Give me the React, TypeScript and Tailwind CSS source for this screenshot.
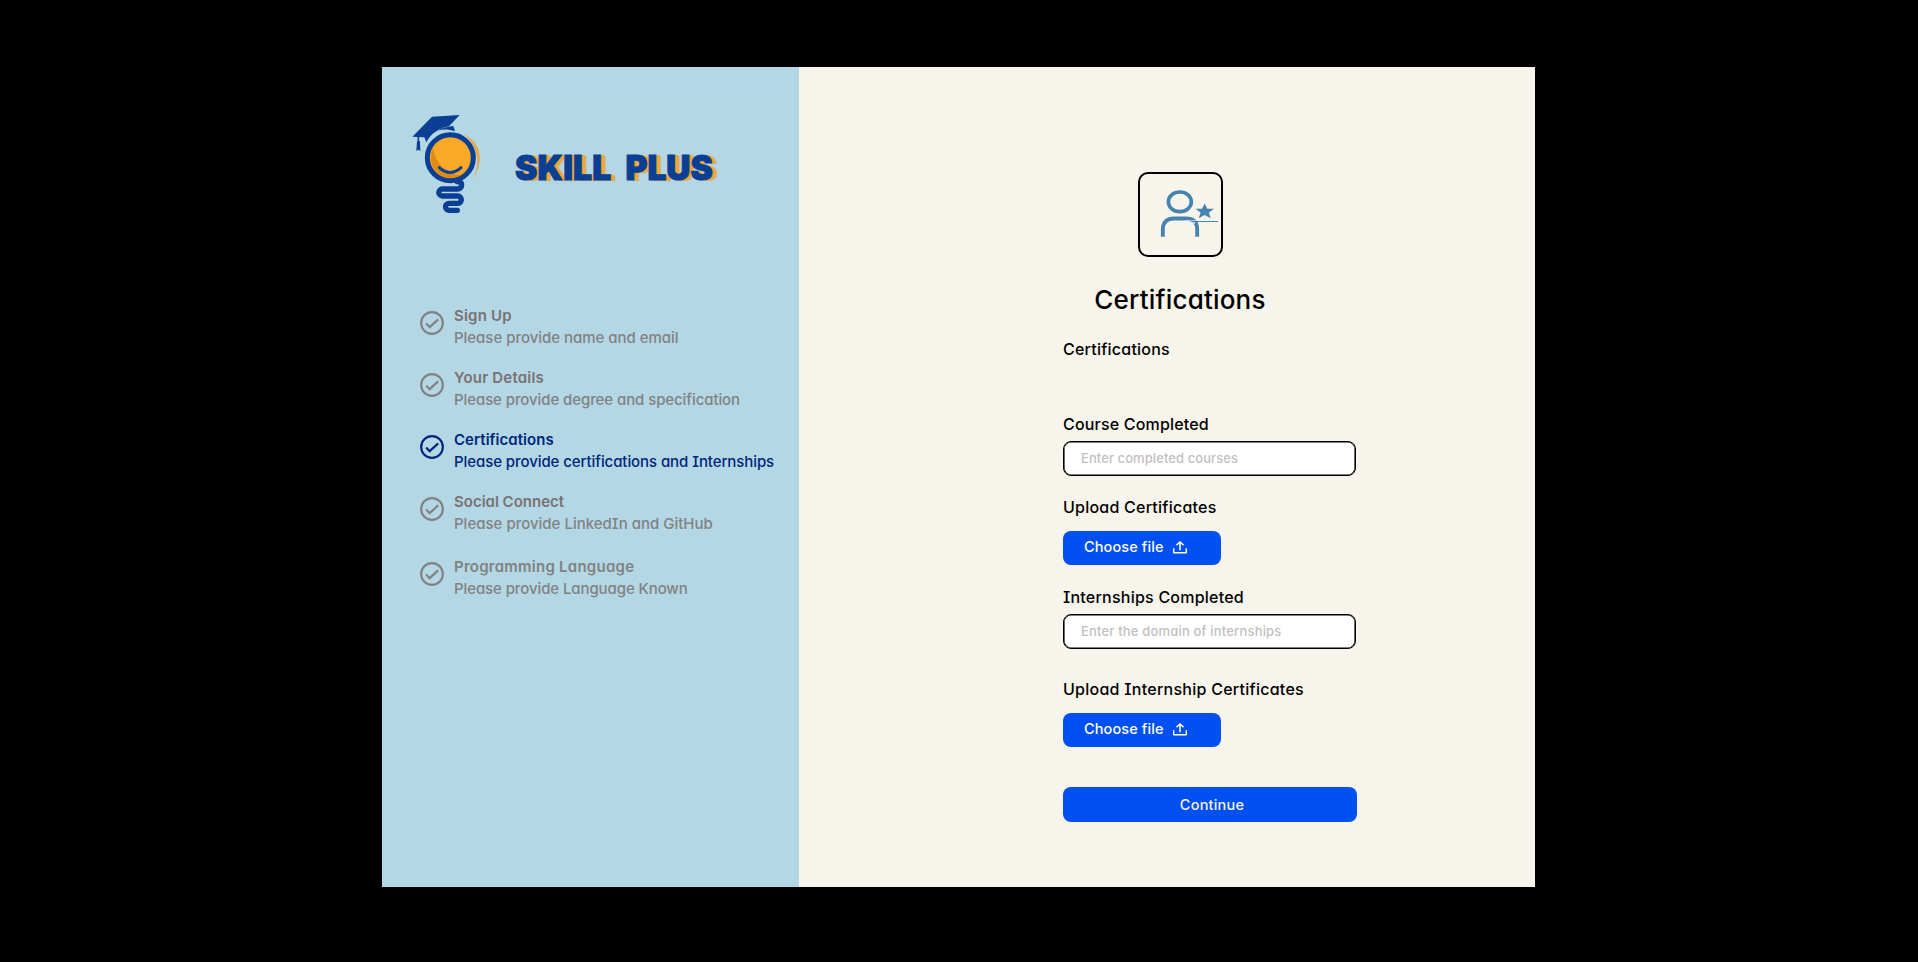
type Step = {
  title: string;
  detail: string;
  spacing: string;
  titleClass: string;
  detailClass: string;
  active?: boolean;
};

const steps: Step[] = [
  {
    title: "Sign Up",
    detail: "Please provide name and email",
    spacing: "mt-0",
    titleClass: "tracking-[0.2px] text-[#7a7272]",
    detailClass: "tracking-[-0.03px] text-[#828282]",
  },
  {
    title: "Your Details",
    detail: "Please provide degree and specification",
    spacing: "mt-[17.6px]",
    titleClass: "tracking-[0.2px] text-[#7a7272]",
    detailClass: "tracking-[-0.09px] text-[#828282]",
  },
  {
    title: "Certifications",
    detail: "Please provide certifications and Internships",
    spacing: "mt-[17.6px]",
    titleClass: "tracking-[0.05px] text-[#00267a]",
    detailClass: "tracking-[-0.08px] text-[#00267a]",
    active: true,
  },
  {
    title: "Social Connect",
    detail: "Please provide LinkedIn and GitHub",
    spacing: "mt-[18.4px]",
    titleClass: "tracking-normal text-[#7a7272]",
    detailClass: "tracking-normal text-[#828282]",
  },
  {
    title: "Programming Language",
    detail: "Please provide Language Known",
    spacing: "mt-[21px]",
    titleClass: "tracking-[0.25px] text-[#828282]",
    detailClass: "tracking-[-0.1px] text-[#828282]",
  },
];

function CheckCircle() {
  return (
    <svg viewBox="0 0 72 72" className="mt-[6px] size-6 shrink-0" fill="none" stroke="currentColor">
      <circle cx="36" cy="36" r="32.5" strokeWidth="6.5" />
      <path d="M18.5 37.5 29 48.5 54.5 25" strokeWidth="6.5" />
    </svg>
  );
}

function BulbLogo() {
  return (
    <svg viewBox="0 0 300 345" className="h-[115px] w-[100px] shrink-0" fill="none">
      <path d="M190 87C228 104 242 135 239 166C237 190 229 208 219 221C230 200 233 181 231 160C228 130 214 105 190 87Z" fill="#e9a94a" />
      <circle cx="151" cy="158.5" r="66" fill="#f9a828" />
      <path d="M98 128C92 142 90 170 99 187C110 210 132 223 155 222C168 221 180 216 188 210C150 212 113 190 98 128Z" fill="#e08a17" />
      <circle cx="151" cy="158.5" r="69" stroke="#0b3f94" strokeWidth="15" />
      <path d="M118 188Q150 217 183 188" stroke="#0b3f94" strokeWidth="9" strokeLinecap="round" />
      <path d="M96 35 179 30 147 64C118 69 92 86 79 112L73 97 37 95Z" fill="#0b3f94" />
      <path d="M113 77C126 68 142 65 160 63L165 79C147 73 130 72 113 77Z" fill="#0b3f94" />
      <path d="M55 93V114" stroke="#0b3f94" strokeWidth="5" />
      <path d="M51 109H60L61 138 55 134 49 138Z" fill="#0b3f94" />
      <path
        d="M172 230C181 230 185 234 185 240C185 247 180 252 172 252H127A10.5 10.5 0 0 0 127 273H173A10.5 10.5 0 0 1 173 295H147A10.5 10.5 0 0 0 147 316H172"
        stroke="#0b3f94"
        strokeWidth="16"
        strokeLinecap="round"
      />
    </svg>
  );
}

function PersonStar() {
  return (
    <svg viewBox="30 27 243 243" className="size-full" fill="none">
      <g stroke="#4683ae">
        <ellipse cx="149.5" cy="110.5" rx="34.5" ry="29.5" strokeWidth="11" />
        <path d="M98.5 215.5V193C98.5 171 112 160.500 132 160.500H167C189 160.500 201.500 171 201.500 193V215.500" strokeWidth="11.5" />
      </g>
      <path d="M164 167H201" stroke="#f7f4eb" strokeWidth="2" />
      <path d="M186 172H196L193 178Z" fill="#f7f4eb" />
      <path d="M190 169.500H264" stroke="#4683ae" strokeWidth="3" />
      <path
        d="M224 115.500 232 131H252L236.500 143 242.500 160 224 150 206 160 212 143 197 131H216Z"
        fill="#4683ae"
      />
    </svg>
  );
}

function ChooseFile() {
  return (
    <button className="flex h-[34.5px] w-[158px] items-center rounded-lg bg-[#004ff0] pb-[2px] pl-[21px] text-left text-[14.5px] font-medium tracking-[0.1px] text-white">
      <span className="w-[88.5px]">Choose file</span>
      <svg viewBox="0 0 42 38" className="h-[12.7px] w-[14px]" fill="none" stroke="currentColor" strokeWidth="4.5">
        <path d="M2 22V33Q2 35.500 5 35.500H37Q40 35.500 40 33V22" />
        <path d="M21 28V3M10.500 12.500 21 3 31.500 12.500" />
      </svg>
    </button>
  );
}

const labelClass = "h-5 whitespace-nowrap text-base leading-5 font-medium";
const inputClass =
  "h-[34.5px] w-[293px] rounded-lg border border-black bg-white pb-px pl-[17px] text-[13px] font-medium shadow-[inset_0_0_0_0.6px_#000] outline-none placeholder:text-[#c3c0c0]";

export default function App() {
  return (
    <main className="flex h-screen min-h-[962px] w-full justify-center overflow-hidden bg-black pt-[67px] pr-px font-[Inter,sans-serif] text-black [font-feature-settings:'cv08','cv11']">
      <div className="flex h-[820px] w-[1153px]">
        <aside className="w-[417px] shrink-0 bg-[#b3d7e5] pt-[38px]">
          <header className="flex items-start pl-[18px]">
            <BulbLogo />
            <h1 className="mt-[42px] ml-[15px] flex gap-[14px] text-[33.5px] leading-[43px] font-black whitespace-nowrap text-[#0b3f94] [-webkit-text-stroke:1px_#0b3f94] [font-feature-settings:normal] [text-shadow:4px_0_0_#efa63a,5px_1px_1px_#d9a75a]">
              <span className="tracking-[0.2px]">SKILL</span>
              <span>PLUS</span>
            </h1>
          </header>
          <ol className="mt-[85.4px] pl-[38px] text-[15px] leading-[22px] whitespace-nowrap">
            {steps.map((s) => (
              <li key={s.title} className={`flex gap-[10px] ${s.spacing} ${s.active ? "text-[#00267a]" : "text-[#828282]"}`}>
                <CheckCircle />
                <div>
                  <p className={`font-semibold ${s.titleClass}`}>{s.title}</p>
                  <p className={`font-medium ${s.detailClass}`}>{s.detail}</p>
                </div>
              </li>
            ))}
          </ol>
        </aside>
        <section className="flex-1 bg-[#f7f4eb] pt-[105px] pl-[264px]">
          <div className="flex w-[234px] flex-col items-center">
            <div className="size-[85px] rounded-[10px] border-2 border-black">
              <PersonStar />
            </div>
            <h2 className="mt-[27px] text-[26px] leading-8 font-medium tracking-[0.2px]">Certifications</h2>
          </div>
          <p className={`mt-[23px] tracking-[0.23px] ${labelClass}`}>Certifications</p>
          <label className="mt-[55px] block">
            <span className={`block tracking-[0.18px] ${labelClass}`}>Course Completed</span>
            <input className={`mt-[7.3px] block tracking-[0.08px] ${inputClass}`} placeholder="Enter completed courses" />
          </label>
          <p className={`mt-[21.2px] mb-[14px] tracking-[0.23px] ${labelClass}`}>Upload Certificates</p>
          <ChooseFile />
          <label className="mt-[21.5px] block">
            <span className={`block tracking-[0.23px] ${labelClass}`}>Internships Completed</span>
            <input className={`mt-[7.3px] block tracking-[0.18px] ${inputClass}`} placeholder="Enter the domain of internships" />
          </label>
          <p className={`mt-[30.2px] mb-[14px] tracking-[0.26px] ${labelClass}`}>Upload Internship Certificates</p>
          <ChooseFile />
          <button className="mt-[40px] flex h-[34.5px] w-[294px] items-center justify-center rounded-lg bg-[#004ff0] pl-[4px] text-[14.5px] font-medium tracking-[0.2px] text-[#f7f4eb]">
            Continue
          </button>
        </section>
      </div>
    </main>
  );
}
